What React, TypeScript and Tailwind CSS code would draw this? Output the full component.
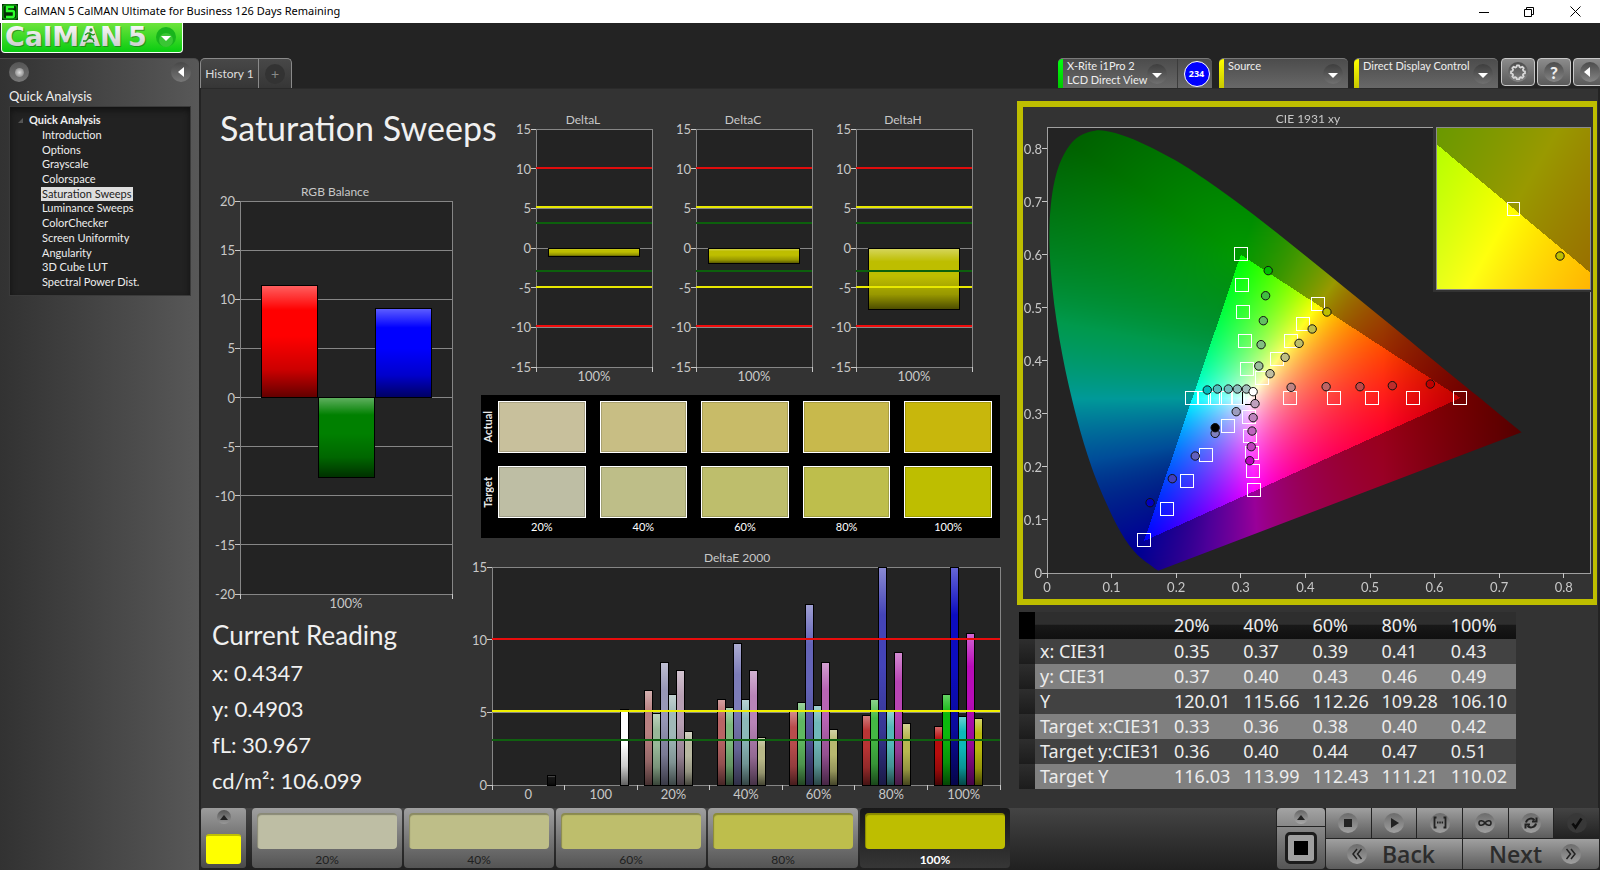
import { useEffect, useId, useRef } from "react";
import type { ReactNode } from "react";

const UI = "font-[Lato,'Noto_Sans',sans-serif]";

/* ---------- bar charts ---------- */

type Bar = { x: number; w: number; value: number; color: string };
type Guide = { value: number; color: string };

type ChartProps = {
  title: string;
  titleX: number;
  width: number;
  height: number;
  plot: { x: number; y: number; w: number; h: number };
  min: number;
  max: number;
  bars: Bar[];
  guides?: Guide[];
  categories: string[];
};

function BarChart({ title, titleX, width, height, plot, min, max, bars, guides = [], categories }: ChartProps) {
  const shade = useId();
  const yOf = (v: number) => plot.y + ((max - Math.min(Math.max(v, min), max)) / (max - min)) * plot.h;
  const ticks: number[] = [];
  for (let v = max; v >= min; v -= 5) ticks.push(v);
  const bottom = plot.y + plot.h;
  const step = plot.w / categories.length;

  return (
    <svg viewBox={`0 0 ${width} ${height}`} className={`block h-auto w-full ${UI} text-[13px]`} role="img" aria-label={title}>
      <defs>
        <linearGradient id={shade} x1="0" y1="0" x2="0" y2="1">
          <stop offset="0" stopColor="#fff" stopOpacity="0.38" />
          <stop offset="0.22" stopColor="#fff" stopOpacity="0" />
          <stop offset="0.45" stopColor="#000" stopOpacity="0" />
          <stop offset="0.75" stopColor="#000" stopOpacity="0.2" />
          <stop offset="1" stopColor="#000" stopOpacity="0.62" />
        </linearGradient>
      </defs>
      <text x={titleX} y={plot.y - 5} textAnchor="middle" fill="#c8c8c8" className="text-[12px]">
        {title}
      </text>
      <rect x={plot.x} y={plot.y} width={plot.w} height={plot.h} fill="#232323" />
      <g shapeRendering="crispEdges" stroke="#868686">
        {ticks.map((v) => (
          <line key={v} x1={plot.x - 5} x2={plot.x + plot.w} y1={yOf(v)} y2={yOf(v)} />
        ))}
        <rect x={plot.x} y={plot.y} width={plot.w} height={plot.h} fill="none" />
        {[...categories, ""].map((c, i) => (
          <line key={i} x1={plot.x + i * step} x2={plot.x + i * step} y1={bottom} y2={bottom + 5} stroke="#c8c8c8" />
        ))}
        {ticks.map((v) => (
          <line key={v} x1={plot.x - 5} x2={plot.x} y1={yOf(v)} y2={yOf(v)} stroke="#c8c8c8" />
        ))}
      </g>
      {bars.map((b, i) => {
        const top = yOf(Math.max(b.value, 0));
        const h = yOf(Math.min(b.value, 0)) - top;
        return (
          <g key={i} shapeRendering="crispEdges">
            <rect x={b.x} y={top} width={b.w} height={h} fill={b.color} />
            <rect x={b.x} y={top} width={b.w} height={h} fill={`url(#${shade})`} stroke="#000" />
          </g>
        );
      })}
      <g shapeRendering="crispEdges">
        {guides.map((g) => (
          <line key={g.value} x1={plot.x} x2={plot.x + plot.w} y1={Math.round(yOf(g.value)) - 1} y2={Math.round(yOf(g.value)) - 1} stroke={g.color} strokeWidth="2" />
        ))}
      </g>
      <g fill="#c8c8c8">
        {ticks.map((v) => (
          <text key={v} x={plot.x - 5} y={yOf(v) + 5} textAnchor="end">
            {v}
          </text>
        ))}
        {categories.map((c, i) => (
          <text key={c} x={plot.x + (i + 0.5) * step} y={bottom + 14} textAnchor="middle">
            {c}
          </text>
        ))}
      </g>
    </svg>
  );
}

const DELTA_GUIDES: Guide[] = [
  { value: 10, color: "#e00c0c" },
  { value: 5, color: "#e8e800" },
  { value: 3, color: "#0c600c" },
  { value: -3, color: "#0c600c" },
  { value: -5, color: "#e8e800" },
  { value: -10, color: "#f00c0c" },
];

const DELTAS = [
  { title: "DeltaL", value: -1.1 },
  { title: "DeltaC", value: -2 },
  { title: "DeltaH", value: -7.8 },
];

const ERROR_GROUPS: { values: number[]; colors: string[] }[] = [
  { values: [6.5, 4.9, 8.4, 6.25, 7.85, 3.65], colors: ["#b88080", "#98b898", "#9898b8", "#a0b8b8", "#b8a0b4", "#b8b8a0"] },
  { values: [5.85, 5.3, 9.75, 5.85, 7.85, 3.3], colors: ["#b86464", "#7cb87c", "#7c7cb8", "#8cb8b8", "#b884b8", "#b8b888"] },
  { values: [5.1, 5.65, 12.4, 5.5, 8.4, 3.8], colors: ["#b84c4c", "#60b860", "#6464b8", "#70b8b8", "#b864b4", "#b8b870"] },
  { values: [4.8, 5.85, 16, 5.1, 9.1, 4.2], colors: ["#b83434", "#44b844", "#4444b8", "#54b8b8", "#b844b4", "#b8b850"] },
  { values: [4, 6.25, 16, 4.7, 10.45, 4.55], colors: ["#b80c0c", "#0cb80c", "#0c0cc0", "#0cb8b8", "#b80cb8", "#b8b80c"] },
];

const ERROR_BARS: Bar[] = [
  { x: 77, w: 8, value: 0.65, color: "#151515" },
  { x: 150, w: 8, value: 5.2, color: "#ffffff" },
  ...ERROR_GROUPS.flatMap((g, i) =>
    g.values.map((value, k) => ({ x: Math.round(174 + i * 72.6) + k * 8, w: 8, value, color: g.colors[k] })),
  ),
];

/* ---------- chromaticity diagram ---------- */

const LOCUS = [
  [0.1741, 0.005], [0.1714, 0.0051], [0.1644, 0.0109], [0.1566, 0.0177], [0.144, 0.0297], [0.1355, 0.0399],
  [0.1241, 0.0578], [0.1096, 0.0868], [0.0913, 0.1327], [0.0687, 0.2007], [0.0454, 0.295], [0.0235, 0.4127],
  [0.0082, 0.5384], [0.0039, 0.6548], [0.0139, 0.7502], [0.0389, 0.812], [0.0743, 0.8338], [0.1142, 0.8262],
  [0.1547, 0.8059], [0.1929, 0.7816], [0.2296, 0.7543], [0.3016, 0.6923], [0.3731, 0.6245], [0.4441, 0.5547],
  [0.5125, 0.4866], [0.5752, 0.4242], [0.627, 0.3725], [0.6658, 0.334], [0.6915, 0.3083], [0.719, 0.2809],
  [0.7347, 0.2653],
];

const TARGETS = [
  [0.3, 0.602], [0.302, 0.543], [0.304, 0.492], [0.306, 0.437], [0.31, 0.385],
  [0.42, 0.508], [0.397, 0.469], [0.377, 0.437], [0.356, 0.403], [0.333, 0.367],
  [0.2237, 0.3305], [0.2435, 0.3305], [0.2597, 0.3305], [0.2772, 0.3305], [0.2958, 0.3305],
  [0.3756, 0.3305], [0.4443, 0.3305], [0.5025, 0.3305], [0.5671, 0.3305], [0.64, 0.3305],
  [0.2795, 0.277], [0.2464, 0.223], [0.216, 0.1734], [0.1852, 0.1212], [0.15, 0.0622],
  [0.3133, 0.2947], [0.315, 0.2588], [0.3168, 0.2268], [0.3191, 0.1929], [0.3209, 0.1571],
];

const READINGS: [number, number, string][] = [
  [0.3424, 0.57, "#00be00"], [0.3384, 0.5227, "#40be40"], [0.3349, 0.4756, "#62be62"], [0.3314, 0.4304, "#80be80"], [0.3279, 0.3902, "#9cbe9c"],
  [0.4333, 0.492, "#bebe00"], [0.4105, 0.46, "#bebe48"], [0.3902, 0.4329, "#bebe68"], [0.3686, 0.4065, "#bebe84"], [0.3453, 0.3757, "#bebea0"],
  [0.2481, 0.3449, "#00bebe"], [0.2638, 0.3468, "#50bebe"], [0.2807, 0.3468, "#70bebe"], [0.2947, 0.3468, "#8cbebe"], [0.3087, 0.3468, "#a4bebe"],
  [0.3779, 0.35, "#be8484"], [0.4321, 0.3512, "#be6464"], [0.4845, 0.3512, "#be4848"], [0.5346, 0.3531, "#be2c2c"], [0.5934, 0.3562, "#be0000"],
  [0.322, 0.3192, "#bea0be"], [0.3191, 0.2928, "#be84be"], [0.3174, 0.2676, "#be64be"], [0.3162, 0.2381, "#be40be"], [0.3139, 0.2117, "#be00be"],
  [0.2929, 0.3041, "#9c9cbe"], [0.2603, 0.2632, "#8080be"], [0.2295, 0.2205, "#6060be"], [0.194, 0.1778, "#4040be"], [0.1596, 0.1326, "#0000be"],
  [0.2603, 0.2739, "#000000"], [0.3191, 0.3418, "#ffffff"],
];

const CIE = { w: 570, h: 492, x0: 24, y0: 466, sx: 646, sy: 530.5, right: 567, top: 20 };
const INSET = { x: 413, y: 20, w: 154, h: 162, cx: 0.4193, cy: 0.5053, sx: 3040, sy: 3200 };
const px = (x: number) => CIE.x0 + x * CIE.sx;
const py = (y: number) => CIE.y0 - y * CIE.sy;

const PRIMARIES = [
  [0.64, 0.33],
  [0.3, 0.6],
  [0.15, 0.06],
];
const FADE = [0, 1.1, 2];

function chromaticity(x: number, y: number): number[] {
  const X = x / y;
  const Z = (1 - x - y) / y;
  const lin = [
    3.2406 * X - 1.5372 - 0.4986 * Z,
    -0.9689 * X + 1.8758 + 0.0415 * Z,
    0.0557 * X - 0.204 + 1.057 * Z,
  ];
  const inside = lin.every((c) => c >= 0);
  const top = Math.max(...lin);
  const deepRed = 1 - 2.1 * Math.max(0, x - 0.52);
  const rgb = lin.map((c) => (Math.max(c, 0) / top) * deepRed);
  if (inside) return rgb.map((c) => c * 255);
  const lead = lin.indexOf(top);
  const second = [...rgb].sort((a, b) => b - a)[1];
  const distance = Math.hypot(x - PRIMARIES[lead][0], y - PRIMARIES[lead][1]);
  const fade = Math.max(0.5, 1 - FADE[lead] * distance * Math.max(0, 1 - 2 * second));
  return rgb.map((c) => c * 153 * fade);
}

function colourField(w: number, h: number, toXY: (i: number, j: number) => [number, number]) {
  const field = document.createElement("canvas");
  field.width = w;
  field.height = h;
  const ctx = field.getContext("2d")!;
  const image = ctx.createImageData(w, h);
  for (let j = 0; j < h; j++) {
    for (let i = 0; i < w; i++) {
      const [x, y] = toXY(i, j);
      const [r, g, b] = chromaticity(x, Math.max(y, 0.001));
      image.data.set([r, g, b, 255], (j * w + i) * 4);
    }
  }
  ctx.putImageData(image, 0, 0);
  return field;
}

function Gamut() {
  const ref = useRef<HTMLCanvasElement>(null);
  useEffect(() => {
    const ctx = ref.current!.getContext("2d")!;
    ctx.fillStyle = "#232323";
    ctx.fillRect(CIE.x0, CIE.top, CIE.right - CIE.x0, CIE.y0 - CIE.top);
    const path = new Path2D();
    const last = LOCUS.length - 1;
    path.moveTo(px(LOCUS[0][0]), py(LOCUS[0][1]));
    for (let i = 0; i < last; i++) {
      const p0 = LOCUS[Math.max(i - 1, 0)];
      const p1 = LOCUS[i];
      const p2 = LOCUS[i + 1];
      const p3 = LOCUS[Math.min(i + 2, last)];
      path.bezierCurveTo(
        px(p1[0] + (p2[0] - p0[0]) / 6), py(p1[1] + (p2[1] - p0[1]) / 6),
        px(p2[0] - (p3[0] - p1[0]) / 6), py(p2[1] - (p3[1] - p1[1]) / 6),
        px(p2[0]), py(p2[1]),
      );
    }
    path.closePath();
    ctx.save();
    ctx.clip(path);
    ctx.drawImage(colourField(CIE.w, CIE.h, (i, j) => [(i + 0.5 - CIE.x0) / CIE.sx, (CIE.y0 - j - 0.5) / CIE.sy]), 0, 0);
    ctx.restore();
    ctx.fillStyle = "#333333";
    ctx.fillRect(INSET.x - 3, INSET.y - 1, INSET.w + 4, INSET.h + 4);
    ctx.drawImage(
      colourField(INSET.w, INSET.h, (i, j) => [
        INSET.cx + (i + 0.5 - INSET.w / 2) / INSET.sx,
        INSET.cy - (j + 0.5 - INSET.h / 2) / INSET.sy,
      ]),
      INSET.x,
      INSET.y,
    );
  }, []);
  return <canvas ref={ref} width={CIE.w} height={CIE.h} className="col-start-1 row-start-1 block h-auto w-full" />;
}

function CiePanel() {
  const xTicks = [0, 0.1, 0.2, 0.3, 0.4, 0.5, 0.6, 0.7, 0.8];
  return (
    <section className="grid border-y-6 border-r-4 border-l-6 border-[#bebe00] bg-[#333]">
      <Gamut />
      <svg viewBox={`0 0 ${CIE.w} ${CIE.h}`} className={`col-start-1 row-start-1 block h-auto w-full ${UI} text-[13px]`} role="img" aria-label="CIE 1931 xy">
        <g fill="#c8c8c8">
          <text x="285" y="16" textAnchor="middle" className="text-[12px]">CIE 1931 xy</text>
          {xTicks.map((v) => (
            <text key={v} x={px(v)} y={CIE.y0 + 19} textAnchor="middle">{v}</text>
          ))}
          {xTicks.map((v) => (
            <text key={v} x={CIE.x0 - 5} y={py(v) + 5} textAnchor="end">{v}</text>
          ))}
        </g>
        <g shapeRendering="crispEdges" fill="none" stroke="#a0a0a0">
          <path d={`M${INSET.x - 3} ${CIE.top}H${CIE.x0}V${CIE.y0}H${CIE.right}V${INSET.y + INSET.h + 3}`} />
          {xTicks.map((v) => (
            <path key={v} d={`M${px(v)} ${CIE.y0}v5M${CIE.x0 - 5} ${py(v)}h5`} stroke="#c8c8c8" />
          ))}
          <rect x={INSET.x} y={INSET.y} width={INSET.w} height={INSET.h} stroke="#8c8c8c" />
        </g>
        <g fill="none" shapeRendering="crispEdges">
          <rect x={Math.round(px(0.3127)) - 7} y={Math.round(py(0.3305)) - 7} width="13" height="13" stroke="#000" />
          {TARGETS.map(([x, y], i) => (
            <rect key={i} x={Math.round(px(x)) - 7} y={Math.round(py(y)) - 7} width="13" height="13" stroke="#fff" />
          ))}
          <rect x={INSET.x + 71} y={INSET.y + 75} width="12" height="13" stroke="#fff" />
        </g>
        <g stroke="#111" strokeWidth="1">
          {READINGS.map(([x, y, c], i) => (
            <circle key={i} cx={px(x)} cy={py(y)} r="4.2" fill={c} />
          ))}
          <circle cx={INSET.x + 124} cy={INSET.y + 129} r="4.2" fill="#bebe00" />
        </g>
      </svg>
    </section>
  );
}

/* ---------- data table ---------- */

const LEVELS = ["20%", "40%", "60%", "80%", "100%"];
const ROWS: [string, string[]][] = [
  ["x: CIE31", ["0.35", "0.37", "0.39", "0.41", "0.43"]],
  ["y: CIE31", ["0.37", "0.40", "0.43", "0.46", "0.49"]],
  ["Y", ["120.01", "115.66", "112.26", "109.28", "106.10"]],
  ["Target x:CIE31", ["0.33", "0.36", "0.38", "0.40", "0.42"]],
  ["Target y:CIE31", ["0.36", "0.40", "0.44", "0.47", "0.51"]],
  ["Target Y", ["116.03", "113.99", "112.43", "111.21", "110.02"]],
];

function DataTable() {
  return (
    <table className="mt-[7px] ml-[9px] w-[497px] table-fixed border-collapse text-left font-['Noto_Sans',sans-serif] text-[18px] leading-[25px] text-[#ececec]">
      <colgroup>
        <col className="w-4" />
        <col className="w-[135px]" />
      </colgroup>
      <thead>
        <tr className="h-[27px] bg-linear-to-b from-[#2e2e2e] from-45% via-[#181818] via-50% to-[#101010]">
          <th className="bg-black p-0" />
          <th className="p-0" />
          {LEVELS.map((l) => (
            <th key={l} scope="col" className="p-0 pl-1 font-normal">{l}</th>
          ))}
        </tr>
      </thead>
      <tbody>
        {ROWS.map(([name, values]) => (
          <tr key={name} className="h-[25px] bg-[#424242] even:bg-[#808080]">
            <td className="bg-linear-to-b from-[#2e2e2e] to-[#1c1c1c] p-0" />
            <th scope="row" className="p-0 pl-[5px] font-normal whitespace-nowrap">{name}</th>
            {values.map((v, i) => (
              <td key={i} className="p-0 pl-1">{v}</td>
            ))}
          </tr>
        ))}
      </tbody>
    </table>
  );
}

/* ---------- swatches ---------- */

const ACTUAL = ["bg-[#c8c09c]", "bg-[#c8be84]", "bg-[#c8bb68]", "bg-[#c8b94c]", "bg-[#c8b70c]"];
const TARGET = ["bg-[#bebea4]", "bg-[#bebe88]", "bg-[#bebe6c]", "bg-[#bebe4c]", "bg-[#bebe00]"];

function SwatchPanel() {
  const rows: [string, string[]][] = [["Actual", ACTUAL], ["Target", TARGET]];
  return (
    <section className="mt-[8px] mr-[10px] ml-[11px] flex flex-col gap-y-[13px] bg-black pt-[6px] pr-[8px] pb-1 text-[11px] text-white">
      {rows.map(([name, colors]) => (
        <div key={name} className="flex h-[52px]">
          <div className="flex w-[17px] items-center pl-px">
            <span className="rotate-180 leading-3 font-bold text-[#e8e8e8] [writing-mode:vertical-rl]">{name}</span>
          </div>
          <div className="grid flex-1 grid-cols-5 gap-[14px]">
            {colors.map((c) => (
              <div key={c} className={`border border-white shadow-[inset_0_0_0_1px_rgba(0,0,0,0.15)] ${c}`} />
            ))}
          </div>
        </div>
      ))}
      <div className="-mt-[11px] ml-[17px] grid grid-cols-5 gap-[14px] text-center leading-[14px]">
        {LEVELS.map((l) => (
          <span key={l}>{l}</span>
        ))}
      </div>
    </section>
  );
}

/* ---------- chrome ---------- */

function TitleBar() {
  return (
    <div className="flex h-[23px] shrink-0 items-center bg-white pl-[2px] font-['Noto_Sans',sans-serif] text-[11px] text-black">
      <svg width="16" height="16" viewBox="0 0 16 16" aria-hidden="true">
        <rect width="16" height="16" fill="#062c06" />
        <rect x="1" y="1" width="14" height="14" rx="3" fill="none" stroke="#0b8c0b" strokeWidth="1.5" />
        <path d="M12 3H5v4h5.5q1.5 0 1.5 1.5v2.5q0 2-1.5 2H4" fill="none" stroke="#2dff2d" strokeWidth="2.4" />
      </svg>
      <h1 className="ml-[6px] flex-1">CalMAN 5 CalMAN Ultimate for Business 126 Days Remaining</h1>
      <button aria-label="Minimize" className="flex h-full w-[45px] items-center justify-center">
        <svg width="10" height="10"><path d="M0 5.5h10" stroke="#000" /></svg>
      </button>
      <button aria-label="Restore" className="flex h-full w-[45px] items-center justify-center">
        <svg width="10" height="10" fill="none" stroke="#000"><path d="M.5 2.5h7v7h-7zM2.5 2.5v-2h7v7h-2" /></svg>
      </button>
      <button aria-label="Close" className="flex h-full w-[49px] items-center justify-center">
        <svg width="11" height="11" stroke="#000"><path d="M.5.5l10 10M10.5.5l-10 10" /></svg>
      </button>
    </div>
  );
}

function Logo() {
  return (
    <button aria-label="CalMAN 5 menu" className="ml-px block">
      <svg width="182" height="30" viewBox="0 0 182 30" className="block overflow-visible font-['DejaVu_Sans',sans-serif] text-[27px] font-bold">
        <defs>
          <linearGradient id="logo-bg" x1="0" y1="0" x2="0" y2="1">
            <stop offset="0" stopColor="#6ee43c" />
            <stop offset="1" stopColor="#08cc10" />
          </linearGradient>
          <linearGradient id="logo-metal" x1="0" y1="0" x2="0" y2="1">
            <stop offset="0.2" stopColor="#f6f6f6" />
            <stop offset="1" stopColor="#c4c4c4" />
          </linearGradient>
        </defs>
        <path d="M0 0H182V26Q182 30 178 30H4Q0 30 0 26Z" fill="#f4fff4" />
        <path d="M1 0H181V26Q181 29 178 29H4Q1 29 1 26Z" fill="url(#logo-bg)" />
        <g fill="#1f6a1f" opacity="0.6">
          <text x="5" y="23.5">CalMAN</text>
          <text x="128" y="23.5">5</text>
        </g>
        <g fill="url(#logo-metal)">
          <text x="4" y="22.5">CalMAN</text>
          <text x="127" y="22.5">5</text>
        </g>
        <g stroke="#1d8f1d" fill="none" strokeWidth="1.3">
          <circle cx="90" cy="7" r="1" />
          <path d="M84 12l3-2 3 1-2 4 4 1 1 3M88 15l-3 3-3 0M90 11l2 1 2-1" />
        </g>
        <circle cx="165" cy="14" r="10" fill="#18b41c" />
        <circle cx="165" cy="17" r="7" fill="#5cd84c" opacity="0.5" />
        <path d="M160 13h10l-5 5z" fill="#fff" />
      </svg>
    </button>
  );
}

function Knob({ children, className = "" }: { children: ReactNode; className?: string }) {
  return (
    <span className={`flex size-5 shrink-0 items-center justify-center rounded-full ${className}`}>
      {children}
    </span>
  );
}

const DownArrow = () => <svg width="10" height="5" className="mt-[3px]"><path d="M0 0h10l-5 5z" fill="#fff" /></svg>;

function DeviceMenu({ lines, bar, width, children }: { lines: string[]; bar: string; width: string; children?: ReactNode }) {
  return (
    <div className={`flex h-[30px] overflow-hidden rounded-t-[5px] border-t border-[#7a7a7a] bg-linear-to-b from-[#4c4c4c] to-[#686868] ${width}`}>
      <button className="flex min-w-0 flex-1 text-left text-[11px] leading-[14px] text-[#eee]">
        <span className={`h-full w-[5px] shrink-0 ${bar}`} />
        <span className="min-w-0 flex-1 pl-[4px] whitespace-nowrap">
          {lines.map((l) => (
            <span key={l} className="block">{l}</span>
          ))}
        </span>
        <Knob className="mt-[5px] mr-[5px] bg-linear-to-b from-[#3e3e3e] to-[#707070]"><DownArrow /></Knob>
      </button>
      {children}
    </div>
  );
}

function SquareButton({ label, children }: { label: string; children: ReactNode }) {
  return (
    <button aria-label={label} className="flex h-[28px] w-[34px] shrink-0 items-center justify-center rounded-[4px] border border-[#c8c8c8] bg-linear-to-b from-[#8c8c8c] to-[#5a5a5a]">
      <Knob className="bg-linear-to-b from-[#4c4c4c] to-[#868686]">{children}</Knob>
    </button>
  );
}

function TopBar() {
  return (
    <div className="flex h-[30px] items-start overflow-hidden">
      <div className="flex h-full rounded-t-[5px] border-x border-t border-[#8a8a8a] bg-linear-to-b from-[#484848] to-[#363636]">
        <button className="w-[58px] border-r border-[#8a8a8a] text-center text-[12px] text-[#ddd]">History 1</button>
        <button aria-label="Add history tab" className="flex w-8 items-center justify-center">
          <Knob className="bg-[#333] text-[14px] text-[#888]">+</Knob>
        </button>
      </div>
      <div className="flex-1" />
      <div className="-mr-[7px] flex items-start">
        <DeviceMenu lines={["X-Rite i1Pro 2", "LCD Direct View"]} bar="bg-linear-to-b from-[#00ff10] to-[#00c800]" width="mr-[7px] w-[154px]">
          <button className="ml-[5px] flex w-[35px] items-center justify-center border-l border-[#3c3c3c] pl-[3px]">
            <span className="flex size-[26px] items-center justify-center rounded-full border border-white bg-[#0000ff] font-['Open_Sans',sans-serif] text-[9px] font-bold text-white">234</span>
          </button>
        </DeviceMenu>
        <DeviceMenu lines={["Source"]} bar="bg-linear-to-b from-[#ffff00] to-[#c8c800]" width="mr-[6px] w-[129px]" />
        <DeviceMenu lines={["Direct Display Control"]} bar="bg-linear-to-b from-[#ffff00] to-[#c8c800]" width="mr-[3px] w-[144px]" />
        <div className="flex gap-[2px]">
          <SquareButton label="Settings">
            <svg width="16" height="16" viewBox="0 0 24 24" fill="none" stroke="#d8d8d8" strokeWidth="2.6" strokeLinejoin="round">
              <path d="M10.3 3.500h3.400l.5 2.500 2 .9 2.200-1.400 2.200 2.300-1.300 2.200.8 2 2.400.4v3.200l-2.400.5-.8 2 1.300 2.100-2.200 2.300-2.200-1.400-2 .9-.5 2.500h-3.400l-.5-2.500-2-.9-2.200 1.400-2.200-2.300 1.300-2.100-.8-2-2.400-.5v-3.200l2.400-.4.8-2-1.300-2.200 2.200-2.300 2.200 1.400 2-.9z" transform="translate(0 -1.5)" />
            </svg>
          </SquareButton>
          <SquareButton label="Help"><span className="text-[17px] leading-none font-black text-[#eee]">?</span></SquareButton>
          <SquareButton label="Collapse"><svg width="6" height="10" className="mr-[6px]"><path d="M6 0v10L0 5z" fill="#fff" /></svg></SquareButton>
        </div>
      </div>
    </div>
  );
}

const PAGES = [
  "Introduction", "Options", "Grayscale", "Colorspace", "Saturation Sweeps", "Luminance Sweeps",
  "ColorChecker", "Screen Uniformity", "Angularity", "3D Cube LUT", "Spectral Power Dist.",
];

function Sidebar() {
  return (
    <aside className="w-[199px] shrink-0 rounded-tr-[5px] border-t border-[#4a4a4a] bg-linear-to-r from-[#323232] to-[#585858] pr-2 pl-[9px]">
      <div className="flex justify-between pt-[3px]">
        <button aria-label="Pin">
          <Knob className="bg-linear-to-b from-[#555] to-[#777]">
            <span className="size-[9px] rounded-full bg-radial from-[#ddd] to-[#777]" />
          </Knob>
        </button>
        <button aria-label="Collapse sidebar">
          <Knob className="bg-linear-to-b from-[#484848] to-[#777]">
            <svg width="6" height="10"><path d="M6 0v10L0 5z" fill="#fff" /></svg>
          </Knob>
        </button>
      </div>
      <h2 className="mt-[5px] text-[13px] leading-[18px] text-[#eee]">Quick Analysis</h2>
      <nav className="mt-px h-[190px] border border-[#3a3a3a] bg-[#222] pt-[5px] text-[11px] text-[#eee] shadow-[inset_0_3px_6px_#111]">
        <div className="flex h-[16px] items-center font-bold">
          <svg width="5" height="5" className="mr-[6px] ml-[8px]"><path d="M5 0v5H0z" fill="#555" /></svg>
          Quick Analysis
        </div>
        <ul className="flex h-[161px] flex-col justify-between pl-[31px]">
          {PAGES.map((p) => (
            <li key={p} className="h-[14px] leading-[14px] whitespace-nowrap">
              <a href="#" className={p === "Saturation Sweeps" ? "inline-block bg-[#dedede] px-px text-[#222]" : "inline-block px-px"}>{p}</a>
            </li>
          ))}
        </ul>
      </nav>
    </aside>
  );
}

function PatternStrip() {
  return (
    <div className="flex flex-1 gap-[2px] bg-linear-to-b from-[#444] to-[#202020] pb-[2px]">
      <button aria-label="Current pattern" className="mr-1 flex w-[45px] flex-col items-center rounded-[3px] bg-linear-to-b from-[#9c9c9c] to-[#4a4a4a] pt-[2px]">
        <span className="flex size-[14px] items-center justify-center rounded-full bg-linear-to-b from-[#555] to-[#999]">
          <svg width="8" height="5"><path d="M0 5h8L4 0z" fill="#222" /></svg>
        </span>
        <span className="mt-[10px] h-[30px] w-[35px] rounded-[3px] border-t-2 border-[#c0c000] bg-[#ffff00]" />
      </button>
      {LEVELS.map((l, i) => {
        const active = i === 4;
        return (
          <button
            key={l}
            className={`flex w-[150px] flex-col rounded-[4px] px-[5px] pt-[5px] bg-linear-to-b ${active ? "from-[#181818] to-[#363636] font-bold text-white" : "from-[#a0a0a0] to-[#545454] text-[#202020]"}`}
          >
            <span className={`h-[36px] w-full rounded-[4px] shadow-[inset_1px_2px_1px_rgba(0,0,0,0.28)] ${TARGET[i]}`} />
            <span className="w-full pt-[4px] text-center text-[12px] leading-[14px]">{l}</span>
          </button>
        );
      })}
    </div>
  );
}

const ACTIONS: [string, ReactNode][] = [
  ["Stop", <rect x="6" y="6" width="8" height="8" fill="#222" />],
  ["Play", <path d="M7 5l8 5-8 5z" fill="#222" />],
  ["Read series", <path d="M6.5 4.5h-2v10h2M13.5 4.5h2v10h-2M7 9.5h1.5M9.3 9.5h1.5M11.6 9.5h1.5" fill="none" stroke="#222" strokeWidth="1.8" />],
  ["Read continuously", <path d="M10 10C8.5 7.6 4 6.5 4 10s4.5 2.4 6 0c1.5-2.4 6-3.5 6 0s-4.5 2.4-6 0z" fill="none" stroke="#222" strokeWidth="1.6" />],
  ["Repeat", <path d="M5 9.5A5 4.6 0 0 1 13.5 7M15.5 4.5V8.5h-4.5M15 10.5A5 4.6 0 0 1 6.500 13M4.5 15.5V11.5h4.5" fill="none" stroke="#222" strokeWidth="2" />],
  ["Accept", <path d="M5.5 10.500l3 4 6-9" fill="none" stroke="#0c0c0c" strokeWidth="2.6" />],
];

function Controls() {
  const step = "flex items-center justify-between bg-linear-to-b from-[#a0a0a0] to-[#5c5c5c] font-['Open_Sans',sans-serif] text-[23px] leading-none font-semibold text-[#2c2c2c]";
  const knob = "bg-linear-to-b from-[#6c6c6c] to-[#a0a0a0]";
  return (
    <div className="flex gap-px pb-px">
      <div className="flex w-12 flex-col gap-px">
        <button aria-label="Show patterns" className="flex h-[18px] items-center justify-center rounded-t-[4px] bg-linear-to-b from-[#a4a4a4] to-[#888]">
          <span className="flex size-[14px] items-center justify-center rounded-full bg-linear-to-b from-[#666] to-[#aaa]">
            <svg width="8" height="5"><path d="M0 5h8L4 0z" fill="#222" /></svg>
          </span>
        </button>
        <button aria-label="Pattern window" className="flex flex-1 items-center justify-center rounded-b-[4px] bg-linear-to-b from-[#888] to-[#555]">
          <span className="flex size-8 items-center justify-center rounded-[5px] border-3 border-[#1c1c1c] bg-[#a0a0a0]">
            <span className="size-[14px] bg-black" />
          </span>
        </button>
      </div>
      <div className="flex w-[273px] flex-col gap-px">
        <div className="flex h-[30px] gap-px">
          {ACTIONS.map(([label, icon]) => (
            <button
              key={label}
              aria-label={label}
              className={`flex flex-1 items-center justify-center bg-linear-to-b ${label === "Accept" ? "from-[#444] to-[#222]" : "from-[#a0a0a0] to-[#5c5c5c]"}`}
            >
              <Knob className={label === "Accept" ? "bg-[#383838]" : knob}>
                <svg width="20" height="20" viewBox="0 0 20 20">{icon}</svg>
              </Knob>
            </button>
          ))}
        </div>
        <div className="grid flex-1 grid-cols-2 gap-px">
          <button className={`${step} rounded-bl-[4px] pr-[27px] pl-[21px]`}>
            <Knob className={knob}>
              <svg width="12" height="12" fill="none" stroke="#222" strokeWidth="1.5"><path d="M6 1L2 6l4 5M10.5 1l-4 5 4 5" /></svg>
            </Knob>
            Back
          </button>
          <button className={`${step} rounded-br-[4px] pr-[18px] pl-[26px]`}>
            Next
            <Knob className={knob}>
              <svg width="12" height="12" fill="none" stroke="#222" strokeWidth="1.5"><path d="M1.5 1l4 5-4 5M6 1l4 5-4 5" /></svg>
            </Knob>
          </button>
        </div>
      </div>
    </div>
  );
}

export default function App() {
  return (
    <div className={`flex min-h-screen flex-col overflow-hidden bg-[#232323] ${UI}`}>
      <TitleBar />
      <header className="h-[35px] shrink-0">
        <Logo />
      </header>
      <div className="flex flex-1">
        <Sidebar />
        <div className="ml-px flex min-w-0 flex-1 flex-col">
          <TopBar />
          <main className="mr-[2px] ml-px grid flex-1 grid-cols-[minmax(0,269fr)_minmax(0,540fr)_minmax(0,588fr)] items-start border-t border-[#2a2a2a] bg-[#333]">
            <section>
              <h2 className="mt-4 ml-[19px] text-[34px] leading-[46px] whitespace-nowrap text-[#f0f0f0]">Saturation Sweeps</h2>
              <div className="mt-[31px]">
                <BarChart
                  title="RGB Balance"
                  titleX={134}
                  width={269}
                  height={430}
                  plot={{ x: 39, y: 19, w: 212, h: 393 }}
                  min={-20}
                  max={20}
                  categories={["100%"]}
                  bars={[
                    { x: 60, w: 56, value: 11.4, color: "#ff0000" },
                    { x: 117, w: 56, value: -8.1, color: "#008000" },
                    { x: 174, w: 56, value: 9.1, color: "#0000ff" },
                  ]}
                />
              </div>
              <h3 className="mt-[8px] ml-[11px] text-[26px] leading-[30px] text-[#f0f0f0]">Current Reading</h3>
              <ul className="mt-[5px] ml-[11px] text-[22px] leading-9 text-[#f0f0f0]">
                <li>x: 0.4347</li>
                <li>y: 0.4903</li>
                <li>fL: 30.967</li>
                <li>cd/m²: 106.099</li>
              </ul>
            </section>
            <section>
              <div className="mt-5 mr-6 ml-9 grid grid-cols-3">
                {DELTAS.map((d) => (
                  <BarChart
                    key={d.title}
                    title={d.title}
                    titleX={77}
                    width={160}
                    height={278}
                    plot={{ x: 30, y: 20, w: 116, h: 238 }}
                    min={-15}
                    max={15}
                    categories={["100%"]}
                    guides={DELTA_GUIDES}
                    bars={[{ x: 42, w: 91, value: d.value, color: "#bebe00" }]}
                  />
                ))}
              </div>
              <SwatchPanel />
              <div className="mt-2">
                <BarChart
                  title="DeltaE 2000"
                  titleX={267}
                  width={540}
                  height={256}
                  plot={{ x: 22, y: 21, w: 508, h: 218 }}
                  min={0}
                  max={15}
                  categories={["0", "100", ...LEVELS]}
                  guides={[
                    { value: 10, color: "#e80c0c" },
                    { value: 5, color: "#f0f000" },
                    { value: 3, color: "#106010" },
                  ]}
                  bars={ERROR_BARS}
                />
              </div>
            </section>
            <section className="pt-3 pr-px pl-[7px]">
              <CiePanel />
              <div className="-ml-[7px]">
                <DataTable />
              </div>
            </section>
          </main>
          <footer className="mr-px ml-px flex h-[62px] shrink-0 gap-px">
            <PatternStrip />
            <Controls />
          </footer>
        </div>
      </div>
    </div>
  );
}
